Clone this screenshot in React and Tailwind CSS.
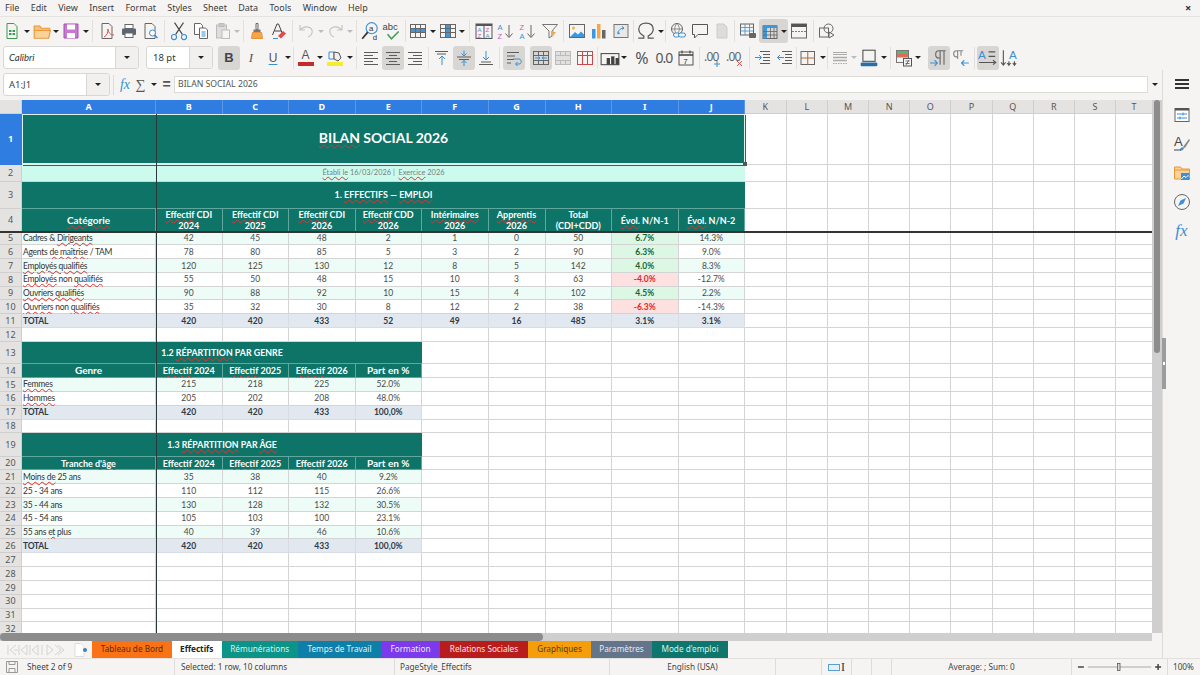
import React from 'react';

const Svg = ({ children, s = 18 }) => (
  <svg width={s} height={s} viewBox="0 0 18 18" fill="none" stroke="#5c5c5c" strokeWidth="1">{children}</svg>
);
const Arrow = ({ c = 'border-t-[#222]' }) => (
  <div className={`w-0 h-0 border-x-[3px] border-t-[3px] border-x-transparent ${c}`} />
);
const Btn = ({ children, on, cls = '' }) => (
  <div className={`w-[22px] h-[24px] shrink-0 flex items-center justify-center rounded-[3px] ${on ? 'bg-[#d8d6d3]' : ''} ${cls}`}>{children}</div>
);
const Dd = ({ gray, cls = '' }) => (
  <div className={`w-[7.5px] h-[24px] shrink-0 flex items-center justify-center ${cls}`}>
    <Arrow c={gray ? 'border-t-[#bbb]' : 'border-t-[#222]'} />
  </div>
);
const Sep = ({ w = 'w-[5px]' }) => (
  <div className={`${w} h-[24px] shrink-0 flex items-center justify-center`}><div className="w-px h-[22px] bg-[#e2e0dd]" /></div>
);

/* toolbar icons */
const NewDoc = () => <Svg><path d="M4 1.5h7l3 3v12H4z" stroke="#3f9a52" /><rect x="6" y="8" width="6" height="5" fill="#3f9a52" stroke="none" /><path d="M6 10.5h6M9 8v5" stroke="#fff" /></Svg>;
const Open = () => <Svg s={20}><path d="M2 4.5h5l1.5 2H16v2H2z" fill="#f9c27a" stroke="#e8983a" /><path d="M2 15.5V8.5h14.500l-1.500 7z" fill="#fbd39a" stroke="#e8983a" /></Svg>;
const Save = () => <Svg><path d="M2 2h14v14H2z" fill="#c77bd0" stroke="#a94fb5" /><rect x="5" y="2.500" width="8" height="5" fill="#fff" stroke="none" /><rect x="5" y="11" width="8" height="5" fill="#fff" stroke="none" /></Svg>;
const Pdf = () => <Svg><path d="M4 1.500h7l3 3v12H4z" stroke="#666" /><path d="M6 15c3-1 4-5 4-8 0 3 2 6 6 6" stroke="#d9534f" /></Svg>;
const Print = () => <Svg><rect x="5" y="2.500" width="8" height="4" fill="#fff" stroke="#666" /><rect x="2" y="6.500" width="14" height="6.500" rx="1" fill="#5b6670" stroke="none" /><rect x="5" y="11" width="8" height="4.500" fill="#fff" stroke="#666" /></Svg>;
const Preview = () => <Svg><path d="M3 1.500h7l3 3v12H3z" stroke="#666" /><circle cx="10.500" cy="11" r="3" fill="#fff" stroke="#3a8fd6" /><path d="m12.500 13 3 3" stroke="#3a8fd6" strokeWidth="1.500" /></Svg>;
const Cut = () => <Svg s={20}><path d="M5 1.500 12 12M13 1.500 6 12" stroke="#444" /><circle cx="4.500" cy="14.500" r="2.300" stroke="#3a8fd6" /><circle cx="13.500" cy="14.500" r="2.300" stroke="#3a8fd6" /></Svg>;
const Copy = () => <Svg><path d="M2.500 1.500h6l2 2v9h-8z" fill="#fff" stroke="#666" /><path d="M7.500 6h6l2 2v8.500h-8z" fill="#fff" stroke="#666" /><path d="M9.500 10h4M9.500 12h4M9.500 14h4" stroke="#3a8fd6" /></Svg>;
const Paste = () => <Svg><rect x="2.500" y="3" width="10" height="13" fill="#ddd" stroke="#bbb" /><rect x="5" y="1.500" width="5" height="3" fill="#c9c9c9" stroke="#bbb" /><rect x="8" y="8" width="7.500" height="8.500" fill="#f5f5f5" stroke="#bbb" /></Svg>;
const Clone = () => <Svg><path d="M8 1.500h2v6H8z" stroke="#666" /><path d="M5.500 7.500h7v3h-7z" fill="#777" stroke="none" /><path d="M4.500 10.500h9l1 6h-11z" fill="#f5a54a" stroke="#e8903a" /></Svg>;
const Clear = () => <Svg><path d="M2.500 13 7 2h1.500L13 13M4.500 9h6.500" stroke="#444" /><path d="m8 14 5-5 3 2.500-5 5z" fill="#e04a4a" stroke="none" /><path d="M3 16.500h5" stroke="#3a8fd6" /></Svg>;
const Undo = () => <Svg><path d="M3 3v5h5M3.500 8C6 4 13 3.500 15 8c1 3-1 6-4 7" stroke="#c4c4c4" strokeWidth="1.200" /></Svg>;
const Redo = () => <Svg><path d="M15 3v5h-5M14.500 8C12 4 5 3.500 3 8c-1 3 1 6 4 7" stroke="#c4c4c4" strokeWidth="1.200" /></Svg>;
const Find = () => <Svg s={20}><circle cx="10.500" cy="6.500" r="5" stroke="#3a8fd6" /><text x="8" y="9" fontSize="7" fill="#333" stroke="none" fontFamily="Liberation Sans">a</text><path d="m7 10-5 6" stroke="#333" strokeWidth="1.500" /><text x="11.500" y="17" fontSize="7" fill="#333" stroke="none" fontFamily="Liberation Sans">d</text></Svg>;
const Spell = () => <Svg s={20}><text x="0.500" y="8.500" fontSize="8.500" fill="#444" stroke="none" fontFamily="Liberation Sans">abc</text><path d="m5 12 3.500 4L15 9.500" stroke="#3fa05a" strokeWidth="1.400" /></Svg>;
const Rows = () => <Svg><rect x="1.500" y="2.500" width="15" height="13" stroke="#666" /><rect x="2" y="6.500" width="14" height="4" fill="#3a97e0" stroke="none" /><path d="M1.500 6.500h15M1.500 10.500h15M6.500 2.500v13M11.500 2.500v13" stroke="#666" /></Svg>;
const Cols = () => <Svg><rect x="1.500" y="2.500" width="15" height="13" stroke="#666" /><rect x="7" y="3" width="4" height="12" fill="#3a97e0" stroke="none" /><path d="M1.500 6.500h15M1.500 10.500h15M6.500 2.500v13M11.500 2.500v13" stroke="#666" /></Svg>;
const Sort = () => <Svg><rect x="1" y="2" width="16" height="14.500" stroke="#555" /><rect x="1" y="2" width="16" height="2" fill="#555" stroke="none" /><path d="M9 4v12" stroke="#555" /><text x="2.500" y="10" fontSize="6" fill="#3a8fd6" stroke="none" fontFamily="Liberation Sans">A</text><text x="2.500" y="15.500" fontSize="6" fill="#c060c0" stroke="none" fontFamily="Liberation Sans">Z</text><text x="10.500" y="10" fontSize="6" fill="#c060c0" stroke="none" fontFamily="Liberation Sans">Z</text><text x="10.500" y="15.500" fontSize="6" fill="#3a8fd6" stroke="none" fontFamily="Liberation Sans">A</text></Svg>;
const SortA = () => <Svg><text x="0.500" y="8" fontSize="7.500" fill="#3a8fd6" stroke="none" fontFamily="Liberation Sans">A</text><text x="0.500" y="16.500" fontSize="7.500" fill="#c060c0" stroke="none" fontFamily="Liberation Sans">Z</text><path d="M12 3v12M8.500 11.500 12 15.500l3.500-4" stroke="#666" /></Svg>;
const SortZ = () => <Svg><text x="0.500" y="8" fontSize="7.500" fill="#c060c0" stroke="none" fontFamily="Liberation Sans">Z</text><text x="0.500" y="16.500" fontSize="7.500" fill="#3a8fd6" stroke="none" fontFamily="Liberation Sans">A</text><path d="M12 3v12M8.500 11.500 12 15.500l3.500-4" stroke="#666" /></Svg>;
const Filter = () => <Svg><path d="M1.500 2.500h15l-5.500 6.500v5l-3 2V9z" stroke="#777" /><path d="m13 6-3 6h2.500l-1.500 4 4-6h-2.500z" fill="#f5a54a" stroke="none" /></Svg>;
const Image = () => <Svg><rect x="1.500" y="2.500" width="15" height="13" stroke="#666" /><circle cx="5.500" cy="6" r="1.500" fill="#f5b14a" stroke="none" /><path d="M2 15l5-5 3 2.500 3-3 3 3v2.500z" fill="#3a97e0" stroke="none" /></Svg>;
const Chart = () => <Svg><rect x="2" y="7" width="3.500" height="9.500" fill="#3a97e0" stroke="none" /><rect x="7" y="2" width="3.500" height="14.500" fill="#f5a54a" stroke="none" /><rect x="12" y="8" width="3.500" height="8.500" fill="#666" stroke="none" /></Svg>;
const Pivot = () => <Svg><rect x="2" y="2.500" width="14" height="13" fill="#e8e8e8" stroke="#777" /><path d="M6 12c0-4 3-6 6-6M10 4.500 12 6l-2 1.500M6 9.500 6 12l2-1" stroke="#3a8fd6" /></Svg>;
const Omega = () => <Svg s={20}><path d="M2 15.500h5v-2C4 12 2.500 10 2.500 7.500 2.500 4 5 2 9 2s6.500 2 6.500 5.500c0 2.500-1.500 4.500-4.500 6v2h5" stroke="#555" strokeWidth="1.100" /></Svg>;
const Link = () => <Svg><circle cx="8" cy="7" r="5.500" stroke="#666" /><path d="M2.500 7h11M8 1.500c-3 3-3 8 0 11M8 1.500c3 3 3 8 0 11" stroke="#666" strokeWidth=".7" /><rect x="4.500" y="11" width="6" height="4" rx="2" fill="#f5f4f2" stroke="#3a8fd6" /><rect x="9.500" y="11" width="7" height="4" rx="2" fill="#f5f4f2" stroke="#3a8fd6" /></Svg>;
const Comment = () => <Svg><path d="M1.500 2.500h15v10H7l-3.500 3.500V12.500h-2z" stroke="#555" /></Svg>;
const Hdr = () => <Svg><path d="M4 2h7l3 3v11H4z" fill="#dcdcdc" stroke="#ccc" /></Svg>;
const PrintArea = () => <Svg><rect x="1.500" y="2" width="13" height="11" stroke="#666" /><path d="M1.500 5.500h13M1.500 9h13M6 2v11M10.500 2v11" stroke="#3a8fd6" strokeWidth=".8" /><rect x="10" y="11" width="7" height="5" rx="1" fill="#666" stroke="none" /></Svg>;
const Freeze = () => <Svg><rect x="2" y="4" width="14" height="12.500" stroke="#666" /><rect x="2" y="3" width="14" height="3" fill="#3a97e0" stroke="none" /><rect x="2" y="3" width="4" height="13.500" fill="#3a97e0" stroke="none" /><path d="M2 9.500h14M2 13h14M9.500 6v10.500M13 6v10.500" stroke="#666" strokeWidth=".8" /></Svg>;
const Split = () => <Svg><rect x="1.500" y="2" width="15" height="14" stroke="#666" /><rect x="1.500" y="2" width="15" height="3" fill="#555" stroke="none" /><path d="M2 9.500h14" stroke="#3a8fd6" strokeDasharray="2 1" /></Svg>;
const Shapes = () => <Svg><rect x="1.500" y="6" width="9" height="9" stroke="#666" /><circle cx="10.500" cy="6.500" r="4.500" stroke="#666" /><path d="m11 10 5 3-5 3z" stroke="#666" /></Svg>;

const AlignL = () => <Svg><path d="M2 3.500h14M2 6.500h9M2 9.500h14M2 12.500h9M2 15.500h14" /></Svg>;
const AlignC = () => <Svg><path d="M2 3.500h14M5 6.500h8M2 9.500h14M5 12.500h8M2 15.500h14" /></Svg>;
const AlignR = () => <Svg><path d="M2 3.500h14M7 6.500h9M2 9.500h14M7 12.500h9M2 15.500h14" /></Svg>;
const VTop = () => <Svg><path d="M2 2.500h13M4 5h9" /><path d="M9 16V7M6 10l3-3 3 3" stroke="#3a8fd6" /></Svg>;
const VMid = () => <Svg><path d="M2 8h14M4 10.500h10" /><path d="M9 1.500V7M6.500 4.500 9 7l2.500-2.500M9 17v-5.500M6.500 14 9 11.500l2.500 2.500" stroke="#3a8fd6" /></Svg>;
const VBot = () => <Svg><path d="M4 13h10M2 15.500h14" /><path d="M9 2v9M6 8l3 3 3-3" stroke="#3a8fd6" /></Svg>;
const Wrap = () => <Svg><path d="M2 3.500h12M2 7h8M2 10.500h7M2 14h4" /><path d="M8 10h6c3 0 3 5 0 5h-3M12.500 13 10.500 15l2 2" stroke="#3a8fd6" /></Svg>;
const Merge = () => <Svg><rect x="1.500" y="2.500" width="15" height="13" stroke="#666" /><path d="M1.500 6.500h15M1.500 11.500h15M6.500 2.500v4M11.500 2.500v4M6.500 11.500v4M11.500 11.500v4" stroke="#666" /><path d="M3 9h5M6 7.500 8 9 6 10.500M15 9h-5M12 7.500 10 9l2 1.500" stroke="#3a8fd6" /></Svg>;
const MergeG = () => <Svg><rect x="1.500" y="2.500" width="15" height="13" fill="#e0e0e0" stroke="#bbb" /><path d="M1.500 6.500h15M1.500 11.500h15M6.500 2.500v4M11.500 2.500v4M6.500 11.500v4M11.500 11.500v4" stroke="#bbb" /></Svg>;
const MergeR = () => <Svg><rect x="1.500" y="2.500" width="15" height="13" stroke="#c94a4a" /><path d="M1.500 6.500h15M6.500 2.500v13M11.500 2.500v13" stroke="#c94a4a" /></Svg>;
const Currency = () => <Svg s={20}><rect x="1" y="5" width="16" height="10" stroke="#555" /><rect x="6" y="9" width="3" height="6" fill="#444" stroke="none" /><rect x="10" y="7.500" width="3" height="7.500" fill="#444" stroke="none" /><rect x="14" y="9" width="3" height="6" fill="#444" stroke="none" /></Svg>;
const DateI = () => <Svg><rect x="2" y="3" width="14" height="13" stroke="#555" /><path d="M2 6h14" stroke="#333" strokeWidth="1.400" /><path d="M5 1.500v3M13 1.500v3" stroke="#333" /><text x="6.300" y="14.500" fontSize="8" fill="#333" stroke="none" fontFamily="Liberation Sans">7</text></Svg>;
const Dec = ({ plus }) => (
  <Svg>
    <text x="0" y="12" fontSize="12" letterSpacing="-0.8" fill="#666" stroke="none" fontFamily="Noto Sans">.00</text>
    {plus ? <path d="M13 12v6M10 15h6" stroke="#3a8fd6" /> : <path d="m11 12 5 5M16 12l-5 5" stroke="#e0524f" />}
  </Svg>
);
const Indent = () => <Svg><path d="M6 2.500h10M9 5.500h7M9 8.500h7M9 11.500h7M6 14.500h10" /><path d="M1 8.500h6M5 6l2.500 2.500L5 11" stroke="#3a8fd6" /></Svg>;
const Outdent = () => <Svg><path d="M6 2.500h10M9 5.500h7M9 8.500h7M9 11.500h7M6 14.500h10" /><path d="M8 8.500H1.500M4 6 1.500 8.500 4 11" stroke="#3a8fd6" /></Svg>;
const Border = () => <Svg><rect x="2" y="2.500" width="13.500" height="13" stroke="#666" /><path d="M8.750 2.500v13M2 9h13.500" stroke="#b56b2c" /></Svg>;
const BStyle = () => <Svg><path d="M2 3.500h14M2 5.500h14" stroke="#aaa" /><path d="M2 8.500h14M2 11.500h14" stroke="#aaa" strokeWidth="1.400" /><path d="M2 14.500h14" stroke="#aaa" strokeDasharray="1.500 1" /></Svg>;
const BColor = () => <Svg s={20}><rect x="3.500" y="2" width="11" height="10" stroke="#555" /><rect x="1.500" y="13" width="15" height="3.500" rx="1" fill="#2a6ea8" stroke="none" /></Svg>;
const Cond = () => <Svg><rect x="1.500" y="1.500" width="12" height="12" stroke="#777" /><rect x="2" y="2" width="11" height="3" fill="#5fb56a" stroke="none" /><rect x="2" y="5" width="11" height="3.500" fill="#e06a5a" stroke="none" /><rect x="8.500" y="9.500" width="8" height="7.500" fill="#f5f4f2" stroke="#555" /><path d="M10.500 12h4M10.500 14.500h4M14 11l-3 5" stroke="#555" strokeWidth=".8" /></Svg>;
const Ltr = () => <Svg s={20}><path d="M10 15V2.500M13.500 15V2.500M15 2.500H9C5 2.500 5 9 9 9h1" stroke="#666" /><path d="M1 13.500h6M5 11l2.500 2.500L5 16" stroke="#3a8fd6" /></Svg>;
const Rtl = () => <Svg s={20}><path d="M6 10V2.500M9 7V2.500M11 2.500H5C1.500 2.500 1.500 8 5 8h1" stroke="#888" /><path d="M16 13.500h-6M12 11 9.500 13.500 12 16" stroke="#3a8fd6" /></Svg>;
const TxtH = () => <Svg s={20}><text x="0" y="9.500" fontSize="10.500" fill="#3a8fd6" stroke="none" fontFamily="Liberation Sans">A</text><path d="M9.500 3.500h6M9.500 7.500h6M1 13h14" stroke="#555" /><path d="m13.500 11 2.500 2-2.500 2" stroke="#555" /></Svg>;
const TxtV = () => <Svg s={20}><text x="8" y="10" fontSize="10.500" fill="#3a8fd6" stroke="none" fontFamily="Liberation Sans">A</text><path d="M3 2v13M1 13l2 2.500L5 13M8 12v3M6.500 13.500 8 15.500l1.500-2M13 12v3M11.500 13.500l1.500 2 1.500-2" stroke="#555" /></Svg>;

const MENU = ['File', 'Edit', 'View', 'Insert', 'Format', 'Styles', 'Sheet', 'Data', 'Tools', 'Window', 'Help'];

function Menu() {
  return (
    <div className="h-[17px] flex items-center pl-[5px] border-b border-[#e6e4e1] relative text-[9px] text-[#3c3c3c] gap-[11.3px]">
      {MENU.map((m) => <span key={m}>{m}</span>)}
      <span className="absolute left-[1185px] top-0 text-[11px] font-bold text-[#333] leading-[16px]">×</span>
    </div>
  );
}

function Toolbar1() {
  return (
    <div className="h-[28px] flex items-center pl-px">
      <Btn><NewDoc /></Btn><Dd />
      <Btn><Open /></Btn><Dd />
      <Btn><Save /></Btn><Dd /><Sep w="w-[6px]" />
      <Btn><Pdf /></Btn><Btn><Print /></Btn><Btn><Preview /></Btn><Sep w="w-[6px]" />
      <Btn><Cut /></Btn><Btn><Copy /></Btn><Btn><Paste /></Btn><Dd gray /><Sep />
      <Btn><Clone /></Btn><Btn><Clear /></Btn><Sep />
      <Btn><Undo /></Btn><Dd gray /><Btn><Redo /></Btn><Dd gray /><Sep />
      <Btn><Find /></Btn><Btn><Spell /></Btn><Sep w="w-[4px]" />
      <Btn><Rows /></Btn><Dd /><Btn><Cols /></Btn><Dd /><Sep w="w-[7px]" />
      <Btn><Sort /></Btn><Btn><SortA /></Btn><Btn><SortZ /></Btn><Btn><Filter /></Btn><Sep />
      <Btn><Image /></Btn><Btn><Chart /></Btn><Btn><Pivot /></Btn><Sep w="w-[3px]" />
      <Btn><Omega /></Btn><Dd /><Sep w="w-[2px]" />
      <Btn><Link /></Btn><Btn><Comment /></Btn><Btn><Hdr /></Btn><Sep w="w-[4px]" />
      <Btn><PrintArea /></Btn>
      <div className="flex items-center rounded-[3px] bg-[#d8d6d3]"><Btn><Freeze /></Btn><Dd /></div>
      <Btn><Split /></Btn><Sep w="w-[6px]" />
      <Btn><Shapes /></Btn>
    </div>
  );
}

function Toolbar2() {
  return (
    <div className="h-[25px] flex items-center pl-[3px] text-[#333]">
      <div className="w-[136px] h-[23px] flex bg-white border border-[#d9d7d4] rounded-[3px] shrink-0">
        <span className="flex-1 pl-[5px] text-[9.5px] italic leading-[21px] font-[Lato]">Calibri</span>
        <div className="w-[23px] bg-[#f1f0ee] border-l border-[#d9d7d4] rounded-r-[3px] flex items-center justify-center"><Arrow /></div>
      </div>
      <div className="w-[67px] h-[23px] ml-[7px] flex bg-white border border-[#d9d7d4] rounded-[3px] shrink-0">
        <span className="flex-1 pl-[6px] text-[9.5px] leading-[21px]">18 pt</span>
        <div className="w-[23px] bg-[#f1f0ee] border-l border-[#d9d7d4] rounded-r-[3px] flex items-center justify-center"><Arrow /></div>
      </div>
      <div className="w-[5px] shrink-0" />
      <Btn on><span className="text-[13px] font-bold text-[#444] font-['Liberation_Sans']">B</span></Btn>
      <Btn><span className="text-[13px] italic text-[#555] font-['Liberation_Serif']">I</span></Btn>
      <Btn><span className="text-[12px] text-[#555] underline decoration-[#3a8fd6] underline-offset-2 font-['Liberation_Sans']">U</span></Btn>
      <Dd /><Sep w="w-[3px]" />
      <Btn>
        <div className="flex flex-col items-center">
          <span className="text-[12px] leading-[13px] text-[#555] font-['Liberation_Sans']">A</span>
          <div className="w-[16px] h-[4px] bg-[#c42b2b]" />
        </div>
      </Btn>
      <Dd />
      <Btn>
        <div className="flex flex-col items-center">
          <svg width="14" height="12" viewBox="0 0 14 12" fill="none"><path d="M1 2h5v7H1z" stroke="#3a8fd6" /><path d="M6 2l5 1 2 5-3 3-4-2z" fill="#eee" stroke="#555" /></svg>
          <div className="w-[16px] h-[4px] bg-[#f5ee2c]" />
        </div>
      </Btn>
      <Dd /><Sep w="w-[6px]" />
      <Btn><AlignL /></Btn><Btn on><AlignC /></Btn><Btn><AlignR /></Btn><Sep w="w-[5px]" />
      <Btn><VTop /></Btn><Btn on><VMid /></Btn><Btn><VBot /></Btn><Sep w="w-[6px]" />
      <Btn on><Wrap /></Btn><div className="w-[5px] shrink-0" />
      <Btn on><Merge /></Btn><Btn><MergeG /></Btn><Btn><MergeR /></Btn><Sep w="w-[3px]" />
      <Btn><Currency /></Btn><Dd /><div className="w-[3px] shrink-0" />
      <Btn><span className="text-[16px] text-[#555] font-['Noto_Sans'] leading-none">%</span></Btn>
      <Btn><span className="text-[14px] text-[#555] font-['Noto_Sans'] leading-none tracking-[-1px]">0.0</span></Btn>
      <Btn><DateI /></Btn><Sep w="w-[5px]" />
      <Btn><Dec plus /></Btn><Btn><Dec /></Btn><Sep w="w-[6px]" />
      <Btn><Indent /></Btn><Btn><Outdent /></Btn><Sep w="w-[1px]" />
      <Btn><Border /></Btn><Dd /><Sep w="w-[2px]" />
      <Btn><BStyle /></Btn><Dd gray />
      <Btn><BColor /></Btn><Dd /><Sep w="w-[5px]" />
      <Btn><Cond /></Btn><Dd /><div className="w-[6px] shrink-0" />
      <Btn on><Ltr /></Btn><Btn><Rtl /></Btn><Sep w="w-[5px]" />
      <Btn on><TxtH /></Btn><Btn><TxtV /></Btn>
    </div>
  );
}

function FormulaBar() {
  return (
    <div className="h-[30px] pb-px flex items-center pl-[3px] text-[#444] shrink-0">
      <div className="w-[107px] h-[23px] flex bg-white border border-[#d9d7d4] rounded-[3px] shrink-0">
        <span className="flex-1 pl-[5px] text-[9.5px] leading-[21px]">A1:J1</span>
        <div className="w-[23px] bg-[#f1f0ee] border-l border-[#d9d7d4] rounded-r-[3px] flex items-center justify-center"><Arrow /></div>
      </div>
      <div className="w-px h-[20px] bg-[#dedcd9] ml-[3px] shrink-0" />
      <span className="w-[20px] ml-px text-center text-[14px] italic text-[#3a8fd6] font-['Liberation_Serif']">fx</span>
      <span className="w-[11px] text-center text-[14px] text-[#555] font-['Liberation_Serif']">∑</span>
      <div className="w-[15px] flex justify-center"><Arrow /></div>
      <span className="w-[11px] text-center text-[14px] font-bold text-[#555] font-['Liberation_Sans']">=</span>
      <div className="w-[974px] ml-[2px] h-[17px] bg-white border border-[#dedcd9] pl-[3px] text-[8.7px] leading-[15px] shrink-0 text-[#555]">BILAN SOCIAL 2026</div>
      <div className="w-[14px] flex justify-center shrink-0"><Arrow /></div>
    </div>
  );
}

/* sheet data: *x* marks a word with the spell-check underline, | a line break */
const Txt = ({ s }) => (
  <>
    {s.split('*').map((p, i) => i % 2
      ? <span key={i} className="underline decoration-wavy decoration-[#d33] decoration-1 underline-offset-[1px]">{p}</span>
      : <span key={i}>{p}</span>)}
  </>
);

const COLS = 'ABCDEFGHIJKLMNOPQRST'.split('');
const TEAL = 'bg-[#0e7468] text-white';
const HB = 'border-r border-b border-[#5fa79d]';
const GRID = 'border-r border-b border-[#d4d4d4]';

const Blank = ({ n }) => Array.from({ length: n }, (_, i) => <div key={'b' + i} className={GRID} />);

const Head = ({ s, big }) => (
  <div className={`${TEAL} ${HB} flex flex-col items-center justify-center pt-px text-center font-bold leading-[11px] font-[Lato] ${big ? 'text-[10px]' : 'text-[9px]'}`}>
    {s.split('|').map((l) => <div key={l} className="whitespace-nowrap"><Txt s={l} /></div>)}
  </div>
);

const Cell = ({ v, cls = '' }) => (
  <div className={`flex items-center justify-center pt-px text-[8.5px] text-[#4a4a4a] font-[Lato] border-r border-b border-[#d4d4d4] ${cls}`}>{v}</div>
);

const Label = ({ s, cls = '' }) => (
  <div className={`flex items-center pl-[1px] pt-px text-[8.5px] tracking-[-0.25px] text-[#333] font-[Lato] border-r border-b border-[#d4d4d4] whitespace-nowrap ${cls}`}>
    <div><Txt s={s} /></div>
  </div>
);

const Data = ({ label, vals, zebra }) => (
  <>
    <Label s={label} cls={zebra ? 'bg-[#eefcf8]' : ''} />
    {vals.map((v, i) => <Cell key={i} v={v} cls={zebra ? 'bg-[#eefcf8]' : ''} />)}
  </>
);

const Total = ({ vals }) => (
  <>
    <div className="flex items-center pl-[1px] pt-px text-[8.5px] tracking-[-0.25px] font-bold text-[#2f3a45] font-[Lato] bg-[#e2e8f0] border-b border-r border-[#d9dde3]">TOTAL</div>
    {vals.map((v, i) => <div key={i} className="flex items-center justify-center pt-px text-[8.5px] font-bold text-[#2f3a45] font-[Lato] bg-[#e2e8f0] border-b border-r border-[#d9dde3]">{v}</div>)}
  </>
);

const Evol = ({ v, neg, zebra, j }) => (
  <>
    <div className={`flex items-center justify-center pt-px text-[8.5px] font-bold font-[Lato] border-r border-b border-[#d4d4d4] ${neg ? 'bg-[#fde0e0] text-[#e5262a]' : 'bg-[#dcf8e4] text-[#166534]'}`}>{v}</div>
    <Cell v={j} cls={zebra ? 'bg-[#eefcf8]' : ''} />
  </>
);

const EMP = [
  ['Cadres & *Dirigeants*', [42, 45, 48, 2, 1, 0, 50], '6.7%', false, '14.3%'],
  ['Agents *de maîtrise* / TAM', [78, 80, 85, 5, 3, 2, 90], '6.3%', false, '9.0%'],
  ['*Employés qualifiés*', [120, 125, 130, 12, 8, 5, 142], '4.0%', false, '8.3%'],
  ['*Employés* non *qualifiés*', [55, 50, 48, 15, 10, 3, 63], '-4.0%', true, '-12.7%'],
  ['*Ouvriers qualifiés*', [90, 88, 92, 10, 15, 4, 102], '4.5%', false, '2.2%'],
  ['*Ouvriers* non *qualifiés*', [35, 32, 30, 8, 12, 2, 38], '-6.3%', true, '-14.3%'],
];
const GENRE = [
  ['*Femmes*', [215, 218, 225, '52.0%']],
  ['*Hommes*', [205, 202, 208, '48.0%']],
];
const AGE = [
  ['*Moins de* 25 ans', [35, 38, 40, '9.2%']],
  ['25 - 34 ans', [110, 112, 115, '26.6%']],
  ['35 - 44 ans', [130, 128, 132, '30.5%']],
  ['45 - 54 ans', [105, 103, 100, '23.1%']],
  ['55 ans *et* plus', [40, 39, 46, '10.6%']],
];

const HEADS4 = ['*Effectif* CDI|2024', '*Effectif* CDI|2025', '*Effectif* CDI|2026', '*Effectif* CDD|2026', '*Intérimaires*|2026', '*Apprentis*|2026', 'Total|(*CDI+CDD*)', '*Évol.* N/N-1', '*Évol.* N/N-2'];
const YEARS = ['*Effectif* 2024', '*Effectif* 2025', '*Effectif* 2026'];
const rowHead = (n, sel) => (
  <div key={'r' + n} className={`flex items-center justify-center text-[9px] font-['Noto_Sans'] border-r border-b ${sel ? 'bg-[#2f7de1] text-white font-bold border-[#2f7de1]' : 'bg-[#e4e3e1] text-[#555] border-[#d0cfcd]'}`}>{n}</div>
);

function Sheet() {
  return (
    <div className="flex-1 relative overflow-hidden bg-white grid grid-cols-[22px_134px_66.5px_66.5px_66.5px_66.5px_66.5px_57px_66.5px_66.5px_66.5px_41.7px_41.2px_41.2px_41.2px_41.2px_41.2px_41.2px_41.2px_41.2px_36.4px] grid-rows-[14px_50.5px_17.5px_27px_22.5px_repeat(8,13.81px)_22px_14px_repeat(4,13.88px)_23.5px_13.5px_repeat(12,13.82px)] content-start">
      <div className="bg-[#e4e3e1] border-r border-b border-[#d0cfcd]" />
      {COLS.map((c, i) => (
        <div key={c} className={`flex items-center justify-center text-[9px] font-['Noto_Sans'] border-r ${i < 10 ? 'bg-[#2f7de1] text-white font-bold border-[#5b97e6]' : 'bg-[#e4e3e1] text-[#555] border-[#d0cfcd] border-b'}`}>{c}</div>
      ))}

      {rowHead(1, true)}
      <div className="col-span-10 relative bg-[#0e7468] border border-[#dff3ee] border-b-2 pb-[2px] flex items-center justify-center text-[14px] font-bold text-white font-[Lato] shadow-[1px_1px_0_#555]">
        <div><Txt s="*BILAN* SOCIAL 2026" /></div>
        <div className="absolute -right-[3px] -bottom-[3px] w-[4px] h-[4px] bg-[#555]" />
      </div>
      <Blank n={10} />

      {rowHead(2)}
      <div className="col-span-10 bg-[#ccfbee] flex items-center justify-center text-[7.4px] text-[#74807e] font-[Lato] border-b border-[#d4d4d4]">
        <div className="whitespace-pre"><Txt s="*Établi le* 16/03/2026 |  *Exercice* 2026" /></div>
      </div>
      <Blank n={10} />

      {rowHead(3)}
      <div className="col-span-10 bg-[#0e7468] flex items-center justify-center text-[8.9px] font-bold text-white font-[Lato] border-b border-[#5fa79d]">
        <div><Txt s="1. *EFFECTIFS* — *EMPLOI*" /></div>
      </div>
      <Blank n={10} />

      {rowHead(4)}
      <Head s="*Catégorie*" big />
      {HEADS4.map((h) => <Head key={h} s={h} />)}
      <Blank n={10} />

      {EMP.map((r, i) => (
        <React.Fragment key={r[0]}>
          {rowHead(5 + i)}
          <Data label={r[0]} vals={r[1]} zebra={i % 2 === 0} />
          <Evol v={r[2]} neg={r[3]} j={r[4]} zebra={i % 2 === 0} />
          <Blank n={10} />
        </React.Fragment>
      ))}

      {rowHead(11)}
      <Total vals={[420, 420, 433, 52, 49, 16, 485, '3.1%', '3.1%']} />
      <Blank n={10} />

      {rowHead(12)}
      <Blank n={20} />

      {rowHead(13)}
      <div className="col-span-5 bg-[#0e7468] pt-px flex items-center justify-center text-[8.8px] font-bold text-white font-[Lato] border-b border-[#5fa79d]">
        <div><Txt s="1.2 *RÉPARTITION* PAR GENRE" /></div>
      </div>
      <Blank n={15} />

      {rowHead(14)}
      <Head s="Genre" big />
      {YEARS.map((h) => <Head key={h} s={h} />)}
      <Head s="Part en %" big />
      <Blank n={15} />

      {GENRE.map((r, i) => (
        <React.Fragment key={r[0]}>
          {rowHead(15 + i)}
          <Data label={r[0]} vals={r[1]} zebra={i === 0} />
          <Blank n={15} />
        </React.Fragment>
      ))}

      {rowHead(17)}
      <Total vals={[420, 420, 433, '100,0%']} />
      <Blank n={15} />

      {rowHead(18)}
      <Blank n={20} />

      {rowHead(19)}
      <div className="col-span-5 bg-[#0e7468] flex items-center justify-center text-[8.8px] font-bold text-white font-[Lato] border-b border-[#5fa79d]">
        <div><Txt s="1.3 *RÉPARTITION* PAR *ÂGE*" /></div>
      </div>
      <Blank n={15} />

      {rowHead(20)}
      <Head s="Tranche *d'âge*" />
      {YEARS.map((h) => <Head key={h} s={h} />)}
      <Head s="Part en %" big />
      <Blank n={15} />

      {AGE.map((r, i) => (
        <React.Fragment key={r[0]}>
          {rowHead(21 + i)}
          <Data label={r[0]} vals={r[1]} zebra={i % 2 === 0} />
          <Blank n={15} />
        </React.Fragment>
      ))}

      {rowHead(26)}
      <Total vals={[420, 420, 433, '100,0%']} />
      <Blank n={15} />

      {[27, 28, 29, 30, 31, 32].map((n) => (
        <React.Fragment key={n}>
          {rowHead(n)}
          <Blank n={20} />
        </React.Fragment>
      ))}

      {/* freeze lines */}
      <div className="absolute left-[155.5px] top-[14px] bottom-0 w-[1.5px] bg-[#2a3a3a]" />
      <div className="absolute left-0 right-0 top-[131px] h-[1.5px] bg-[#333]" />
    </div>
  );
}

const TABS = [
  ['Tableau de Bord', 'w-[80px] bg-[#f97316] text-[#5c2a06]'],
  ['Effectifs', 'w-[49.5px] bg-white text-[#222] font-bold'],
  ['Rémunérations', 'w-[76.5px] bg-[#0d9488] text-[#d8f3ef]'],
  ['Temps de Travail', 'w-[83px] bg-[#0e7fa8] text-[#e0f2fa]'],
  ['Formation', 'w-[59px] bg-[#7c3aed] text-[#efe6fd]'],
  ['Relations Sociales', 'w-[88px] bg-[#b91c1c] text-[#fbe4e4]'],
  ['Graphiques', 'w-[63px] bg-[#f59e0b] text-[#5a3a05]'],
  ['Paramètres', 'w-[61px] bg-[#64748b] text-[#e6eaf0]'],
  ["Mode d'emploi", 'w-[76px] bg-[#0f766e] text-[#d8f3ef]'],
];

function TabBar() {
  return (
    <div className="h-[17px] flex items-stretch shrink-0 text-[8.2px] pl-[5px]">
      <svg width="64" height="16" viewBox="0 0 64 16" fill="none" stroke="#d5d3d0" className="self-center shrink-0">
        <path d="M3 3v10M11 3 5 8l6 5M9 8h4M14 3v10M22 3l-6 5 6 5zM25 3v10M33 3l-6 5 6 5zM42 3l6 5-6 5zM37 3v10M50 3l6 5-6 5M53 3l6 5-6 5" />
      </svg>
      <div className="w-[23px] flex items-center justify-center shrink-0">
        <svg width="14" height="14" viewBox="0 0 14 14" fill="none"><path d="M1 .5h6l3 3v10H1z" fill="#fff" stroke="#ddd" /><circle cx="11" cy="7" r="2" fill="#3a7fc0" /></svg>
      </div>
      {TABS.map(([t, c]) => (
        <div key={t} className={`flex items-center justify-center shrink-0 ${c}`}>{t}</div>
      ))}
    </div>
  );
}

function Sidebar() {
  return (
    <div className="w-[38px] shrink-0 border-l border-[#dedcd9] relative flex flex-col items-center">
      <div className="mt-[9px] mb-[17px] w-[14px] flex flex-col gap-[2.5px]">
        <div className="h-[1.5px] bg-[#333]" /><div className="h-[1.5px] bg-[#333]" /><div className="h-[1.5px] bg-[#333]" />
      </div>
      <div className="flex flex-col gap-[11px] items-center">
        <Svg><rect x="2" y="2.500" width="14" height="13" fill="#fff" stroke="#666" /><rect x="2" y="2" width="14" height="2.500" fill="#555" stroke="none" /><path d="M4 8h10M4 12h10" stroke="#3a8fd6" /><path d="M10 6.500v3M7 10.500v3" stroke="#3a8fd6" /></Svg>
        <Svg><text x="1" y="11" fontSize="13" fill="#444" stroke="none" fontFamily="Liberation Sans">A</text><path d="M10 12l6-8 1 1-5 8z" fill="#888" stroke="none" /><path d="M7 15c0-2 2-3.500 4-2.500 0 2-2 4-4 2.500z" fill="#3a8fd6" stroke="none" /><path d="M1 15h7" stroke="#444" /></Svg>
        <Svg><path d="M1.500 3h6l1.500 2h7.500v4H1.500z" fill="#fbd39a" stroke="#e8983a" /><path d="M1.500 15V6h15v9z" fill="#fbd39a" stroke="#e8983a" /><rect x="8" y="9" width="8.500" height="7" fill="#3a8fd6" stroke="none" /><path d="M8.500 15l2.500-3 2 1.500 2-2 1 1" stroke="#fff" /></Svg>
        <Svg><circle cx="9" cy="9" r="7.500" stroke="#666" /><path d="M13 5 10.500 10.500 5 13l2.500-5.500z" fill="#3a8fd6" stroke="none" /></Svg>
        <span className="text-[17px] italic leading-[18px] text-[#3a8fd6] font-['Liberation_Serif']">fx</span>
      </div>
      {/* sidebar collapse handle */}
      <div className="absolute -left-[1.500px] top-[268px] w-[4.500px] h-[51px] bg-[#9c9c9c] flex items-center justify-center">
        <div className="w-[2px] h-[3px] bg-white" />
      </div>
    </div>
  );
}

function StatusBar() {
  const cell = 'border-r border-[#dedcd9] h-full flex items-center shrink-0';
  return (
    <div className="h-[17px] flex items-center text-[8.2px] text-[#444] border-t border-[#e2e0dd] shrink-0">
      <div className={`${cell} w-[175px] pl-[6px] gap-[9px]`}>
        <svg width="12" height="12" viewBox="0 0 12 12" fill="none" stroke="#999"><path d="M.5.5h11v11H.5zM3 .5v3h6v-3M3 11.500v-4h6v4" /></svg>
        <span>Sheet 2 of 9</span>
      </div>
      <div className={`${cell} w-[220px] pl-[6px]`}>Selected: 1 row, 10 columns</div>
      <div className={`${cell} w-[215px] pl-[5px]`}>PageStyle_Effectifs</div>
      <div className={`${cell} w-[166px] justify-center`}>English (USA)</div>
      <div className={`${cell} w-[46px]`} />
      <div className={`${cell} w-[30px] pl-[6px] gap-[1px]`}>
        <div className="w-[12px] h-[7px] border border-[#5a9fcf] bg-[#e3f0f8]" />
        <span className="text-[#333] font-['Liberation_Serif'] text-[12px] leading-none">I</span>
      </div>
      <div className={`${cell} w-[20px]`} />
      <div className={`${cell} w-[20px]`} />
      <div className={`${cell} w-[180px] justify-center`}>Average: ; Sum: 0</div>
      <div className={`${cell} w-[96px]`}>
        <svg width="96" height="12" viewBox="0 0 96 12" fill="none" stroke="#444">
          <path d="M6 6h6" strokeWidth="1.500" />
          <path d="M16 6h64" stroke="#aaa" />
          <rect x="46" y="2.500" width="2.500" height="7" fill="#ddd" stroke="#555" strokeWidth=".8" />
          <path d="M84 6h6M87 3v6" strokeWidth="1.500" />
        </svg>
      </div>
      <span className="pl-[5px] whitespace-nowrap">100%</span>
    </div>
  );
}

export default function App() {
  return (
    <div className="w-[1200px] h-[675px] overflow-hidden bg-[#f5f4f2] flex flex-col font-['Noto_Sans',sans-serif]">
      <Menu />
      <Toolbar1 />
      <Toolbar2 />
      <div className="flex flex-1 min-h-0">
        <div className="w-[1162px] shrink-0 flex flex-col">
          <FormulaBar />
          <div className="h-[533px] flex shrink-0">
            <Sheet />
            <div className="w-[10px] shrink-0 bg-[#cfcfcf]">
              <div className="h-[253px] ml-[1.500px] w-[6px] bg-[#8c8c8c] rounded-[3px]" />
            </div>
          </div>
          <div className="h-[8px] shrink-0 bg-[#cfcfcf] mr-[10px]">
            <div className="h-full w-[543px] bg-[#8c8c8c] rounded-[4px]" />
          </div>
          <TabBar />
        </div>
        <Sidebar />
      </div>
      <StatusBar />
    </div>
  );
}
